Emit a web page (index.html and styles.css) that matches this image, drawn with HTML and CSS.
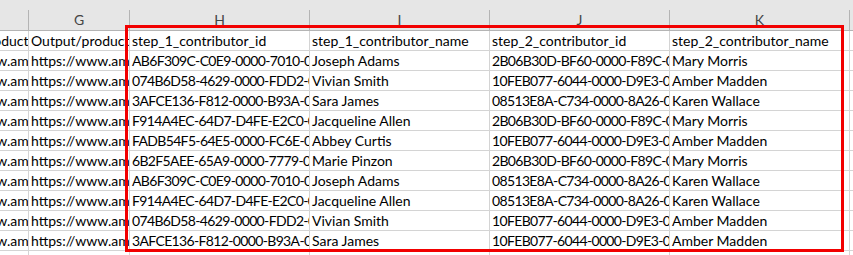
FILE: index.html
```html
<!DOCTYPE html>
<html lang="en">
<head>
<meta charset="utf-8">
<title>contributors.csv</title>
<link rel="stylesheet" href="styles.css">
</head>
<body>
<div class="app">
  <div class="toolbar-edge"></div>
  <div class="viewport">
    <div class="sheet">
      <div class="hd">F</div>
      <div class="hd">G</div>
      <div class="hd">H</div>
      <div class="hd">I</div>
      <div class="hd">J</div>
      <div class="hd">K</div>
      <div class="hd">L</div>

      <div class="c">Output/product_url</div>
      <div class="c">Output/product_title</div>
      <div class="c">step_1_contributor_id</div>
      <div class="c">step_1_contributor_name</div>
      <div class="c">step_2_contributor_id</div>
      <div class="c">step_2_contributor_name</div>
      <div class="c"></div>

      <div class="c">https://www.amazon.com</div>
      <div class="c">https://www.amazon.com</div>
      <div class="c id">AB6F309C-C0E9-0000-7010-08D8</div>
      <div class="c">Joseph Adams</div>
      <div class="c id">2B06B30D-BF60-0000-F89C-08D8</div>
      <div class="c">Mary Morris</div>
      <div class="c"></div>

      <div class="c">https://www.amazon.com</div>
      <div class="c">https://www.amazon.com</div>
      <div class="c id">074B6D58-4629-0000-FDD2-08D8</div>
      <div class="c">Vivian Smith</div>
      <div class="c id">10FEB077-6044-0000-D9E3-08D8</div>
      <div class="c">Amber Madden</div>
      <div class="c"></div>

      <div class="c">https://www.amazon.com</div>
      <div class="c">https://www.amazon.com</div>
      <div class="c id">3AFCE136-F812-0000-B93A-08D8</div>
      <div class="c">Sara James</div>
      <div class="c id">08513E8A-C734-0000-8A26-08D8</div>
      <div class="c">Karen Wallace</div>
      <div class="c"></div>

      <div class="c">https://www.amazon.com</div>
      <div class="c">https://www.amazon.com</div>
      <div class="c id">F914A4EC-64D7-D4FE-E2C0-08D8</div>
      <div class="c">Jacqueline Allen</div>
      <div class="c id">2B06B30D-BF60-0000-F89C-08D8</div>
      <div class="c">Mary Morris</div>
      <div class="c"></div>

      <div class="c">https://www.amazon.com</div>
      <div class="c">https://www.amazon.com</div>
      <div class="c id">FADB54F5-64E5-0000-FC6E-08D8</div>
      <div class="c">Abbey Curtis</div>
      <div class="c id">10FEB077-6044-0000-D9E3-08D8</div>
      <div class="c">Amber Madden</div>
      <div class="c"></div>

      <div class="c">https://www.amazon.com</div>
      <div class="c">https://www.amazon.com</div>
      <div class="c id">6B2F5AEE-65A9-0000-7779-08D8</div>
      <div class="c">Marie Pinzon</div>
      <div class="c id">2B06B30D-BF60-0000-F89C-08D8</div>
      <div class="c">Mary Morris</div>
      <div class="c"></div>

      <div class="c">https://www.amazon.com</div>
      <div class="c">https://www.amazon.com</div>
      <div class="c id">AB6F309C-C0E9-0000-7010-08D8</div>
      <div class="c">Joseph Adams</div>
      <div class="c id">08513E8A-C734-0000-8A26-08D8</div>
      <div class="c">Karen Wallace</div>
      <div class="c"></div>

      <div class="c">https://www.amazon.com</div>
      <div class="c">https://www.amazon.com</div>
      <div class="c id">F914A4EC-64D7-D4FE-E2C0-08D8</div>
      <div class="c">Jacqueline Allen</div>
      <div class="c id">08513E8A-C734-0000-8A26-08D8</div>
      <div class="c">Karen Wallace</div>
      <div class="c"></div>

      <div class="c">https://www.amazon.com</div>
      <div class="c">https://www.amazon.com</div>
      <div class="c id">074B6D58-4629-0000-FDD2-08D8</div>
      <div class="c">Vivian Smith</div>
      <div class="c id">10FEB077-6044-0000-D9E3-08D8</div>
      <div class="c">Amber Madden</div>
      <div class="c"></div>

      <div class="c">https://www.amazon.com</div>
      <div class="c">https://www.amazon.com</div>
      <div class="c id">3AFCE136-F812-0000-B93A-08D8</div>
      <div class="c">Sara James</div>
      <div class="c id">10FEB077-6044-0000-D9E3-08D8</div>
      <div class="c">Amber Madden</div>
      <div class="c"></div>

      <div class="c"></div>
      <div class="c"></div>
      <div class="c"></div>
      <div class="c"></div>
      <div class="c"></div>
      <div class="c"></div>
      <div class="c"></div>
    </div>
  </div>
  <div class="highlight"></div>
</div>
</body>
</html>
```

FILE: styles.css
```css
* {
  box-sizing: border-box;
}

html,
body {
  margin: 0;
  padding: 0;
  background: #ffffff;
}

.app {
  position: relative;
  width: 853px;
  height: 255px;
  overflow: hidden;
  font-family: Lato, "Open Sans", sans-serif;
  color: #000000;
}

/* strip left over from the formula bar above the grid */
.toolbar-edge {
  height: 10px;
  background: #e6e6e6;
}

.viewport {
  overflow: hidden;
}

/* the sheet is scrolled so that column F is mostly off to the left */
.sheet {
  display: grid;
  grid-template-columns: 101px 101px 180px 180px 180px 180px 180px;
  grid-template-rows: 21px repeat(12, 20px);
  margin-left: -72px;
  width: max-content;
}

.hd {
  background: #e6e6e6;
  border-right: 1px solid #b4b4b4;
  border-bottom: 1px solid #b4b4b4;
  color: #444444;
  font-size: 14px;
  line-height: 20px;
  text-align: center;
}

.c {
  border-right: 1px solid #d4d4d4;
  border-bottom: 1px solid #d4d4d4;
  padding: 0 2px;
  font-size: 14px;
  line-height: 19px;
  white-space: nowrap;
  overflow: hidden;
}

/* GUIDs: tighter tracking so the figures sit as narrow as the sheet font's */
.id {
  letter-spacing: -0.65px;
}

/* red selection frame drawn over the contributor columns */
.highlight {
  position: absolute;
  left: 125px;
  top: 25px;
  width: 719px;
  height: 227px;
  border: 3px solid #f20000;
  pointer-events: none;
}
```
